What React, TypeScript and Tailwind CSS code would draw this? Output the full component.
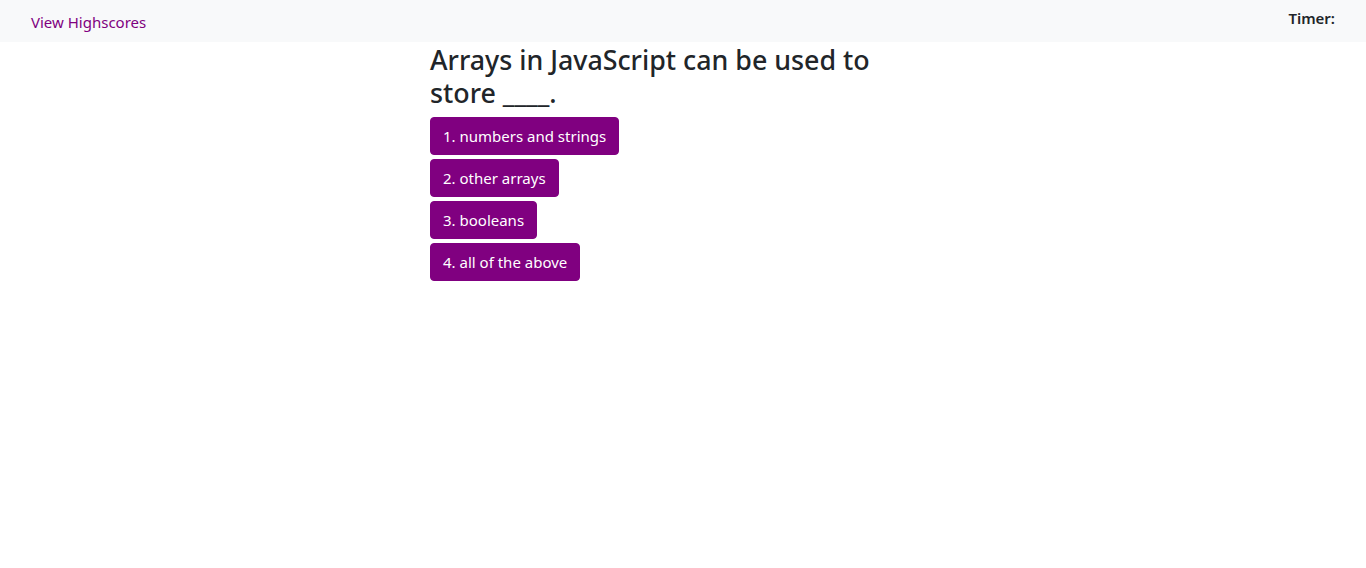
import React from 'react';

const answers = ['1. numbers and strings', '2. other arrays', '3. booleans', '4. all of the above'];

export default function App() {
  return (
    <div
      className="min-h-screen bg-white text-[#212529]"
      style={{ fontFamily: '"Segoe UI", "Noto Sans", sans-serif' }}>
      <nav className="flex h-[42px] items-center justify-between bg-[#f8f9fa] px-[31px]">
        <a href="#" className="mt-[2px] text-[15px] leading-6 text-[#800080]">
          View Highscores
        </a>
        <div className="-mt-[6px] text-[15px] font-semibold leading-6">Timer:</div>
      </nav>
      <main className="mx-auto w-[506px] pt-[1px]">
        <h3 className="mb-2 max-w-[475px] text-[26.8px] font-medium leading-[33px]">
          Arrays in JavaScript can be used to store ____.
        </h3>
        <div className="flex flex-col items-start gap-1">
          {answers.map((a) => (
            <button
              key={a}
              className="rounded-[4px] border border-[#800080] bg-[#800080] px-3 py-[6px] text-[15px] leading-6 text-white">
              {a}
            </button>
          ))}
        </div>
      </main>
    </div>
  );
}
